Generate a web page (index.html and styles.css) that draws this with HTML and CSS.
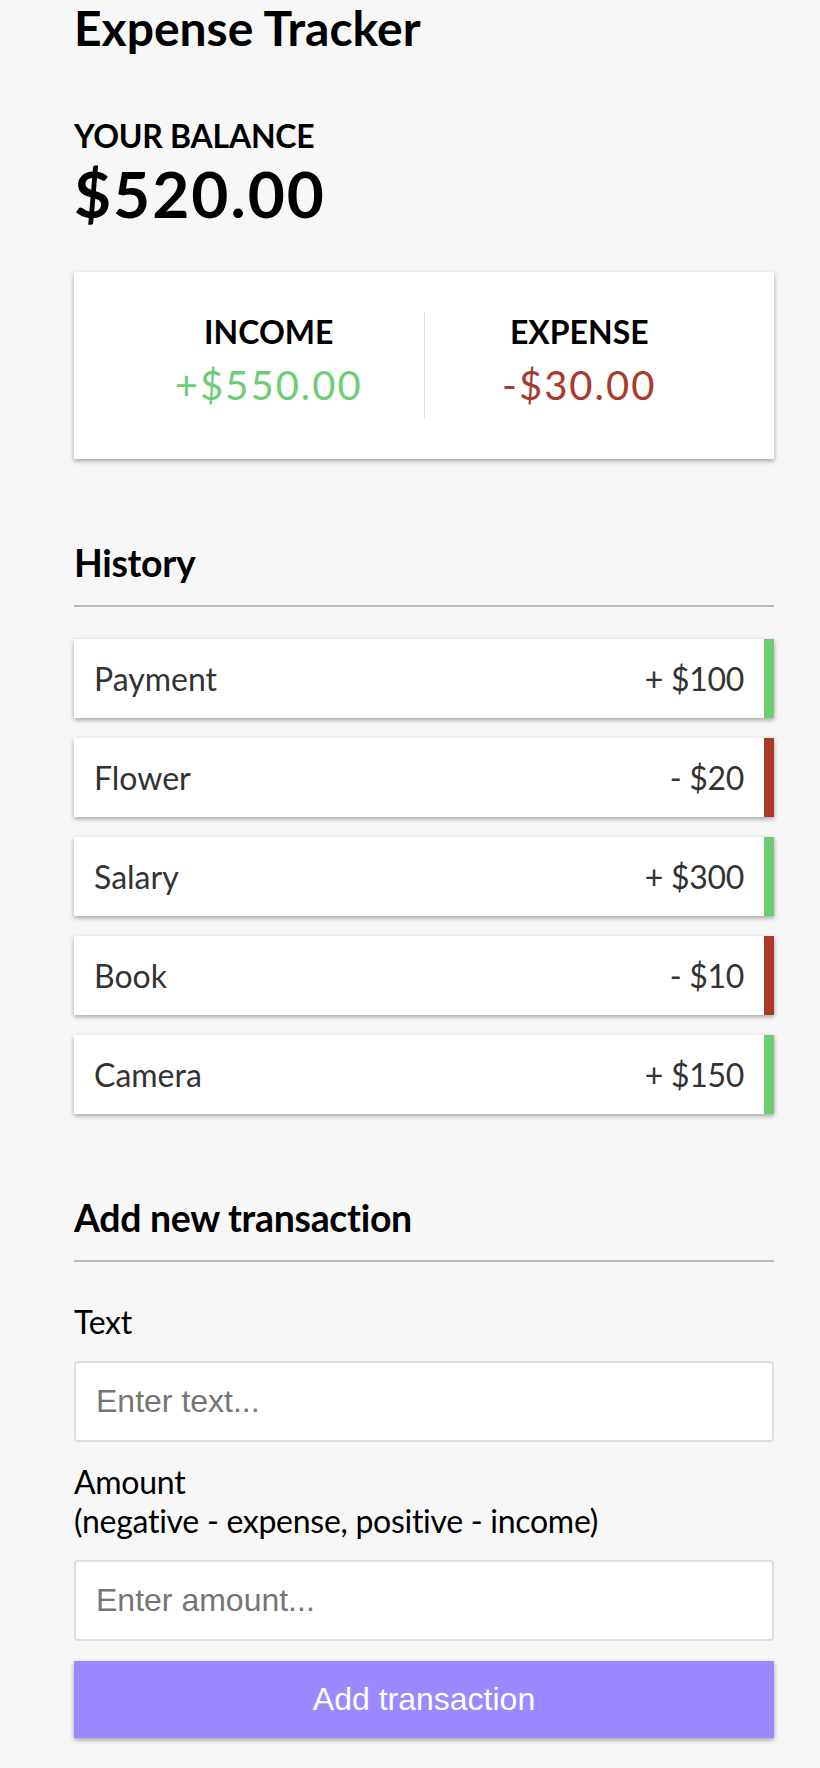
FILE: index.html
```html
<!DOCTYPE html>
<html lang="en">
<head>
<meta charset="UTF-8">
<title>Expense Tracker</title>
<link rel="stylesheet" href="styles.css">
</head>
<body>
<div class="container">
  <h2 class="title">Expense Tracker</h2>

  <div class="balance-block">
    <h4 class="caps">Your Balance</h4>
    <h1 class="balance">$520.00</h1>
  </div>

  <div class="inc-exp">
    <div class="inc-exp-col inc-exp-col--first">
      <h4 class="caps">Income</h4>
      <p class="money money--plus">+$550.00</p>
    </div>
    <div class="inc-exp-col">
      <h4 class="caps">Expense</h4>
      <p class="money money--minus">-$30.00</p>
    </div>
  </div>

  <h3 class="section-title">History</h3>
  <ul class="list">
    <li class="item item--plus">Payment <span class="item-amount">+ $100</span></li>
    <li class="item item--minus">Flower <span class="item-amount">- $20</span></li>
    <li class="item item--plus">Salary <span class="item-amount">+ $300</span></li>
    <li class="item item--minus">Book <span class="item-amount">- $10</span></li>
    <li class="item item--plus">Camera <span class="item-amount">+ $150</span></li>
  </ul>

  <h3 class="section-title">Add new transaction</h3>
  <form class="form">
    <div class="form-control">
      <label class="label" for="text">Text</label>
      <input class="input" type="text" id="text" placeholder="Enter text...">
    </div>
    <div class="form-control">
      <label class="label" for="amount">Amount <br>(negative - expense, positive - income)</label>
      <input class="input" type="number" id="amount" placeholder="Enter amount...">
    </div>
    <button class="btn" type="button">Add transaction</button>
  </form>
</div>
</body>
</html>
```

FILE: styles.css
```css
* {
  box-sizing: border-box;
}

body {
  margin: 0;
  background-color: #f7f7f7;
  font-family: "Lato", "Noto Sans", sans-serif;
  font-size: 32px;
  color: #000;
}

.container {
  width: 700px;
  margin: 0 0 0 74px;
}

.title {
  font-size: 48px;
  font-weight: 700;
  letter-spacing: 0;
  margin: -1px 0 0;
}

.caps {
  font-size: 32px;
  font-weight: 700;
  text-transform: uppercase;
  margin: 0;
}

.balance-block {
  margin-top: 60px;
}

.balance-block .caps {
  letter-spacing: -0.25px;
}

.balance {
  font-size: 64px;
  font-weight: 700;
  letter-spacing: 2px;
  margin: 0;
}

.inc-exp {
  background-color: #fff;
  box-shadow: 0 2px 6px rgba(0, 0, 0, 0.12), 0 2px 4px rgba(0, 0, 0, 0.24);
  padding: 40px;
  display: flex;
  margin: 40px 0;
}

.inc-exp-col {
  flex: 1;
  text-align: center;
}

.inc-exp-col--first {
  border-right: 1px solid #dedede;
}

.money {
  font-size: 40px;
  letter-spacing: 2px;
  margin: 10px 0;
}

.money--plus {
  color: #6fcc74;
}

.money--minus {
  color: #a93a2c;
}

.section-title {
  font-size: 37.44px;
  font-weight: 700;
  letter-spacing: -0.3px;
  border-bottom: 2px solid #bbb;
  padding-bottom: 20px;
  margin: 81px 0 20px;
}

.list {
  list-style-type: none;
  padding: 0;
  margin: 32px 0 80px;
}

.item {
  background-color: #fff;
  box-shadow: 0 2px 6px rgba(0, 0, 0, 0.12), 0 2px 4px rgba(0, 0, 0, 0.24);
  color: #333;
  display: flex;
  justify-content: space-between;
  padding: 20px;
  margin: 20px 0;
}

.item-amount {
  letter-spacing: -0.3px;
}

.item--plus {
  border-right: 10px solid #6fcb73;
}

.item--minus {
  border-right: 10px solid #a9392b;
}

.form {
  margin: 0;
}

.label {
  display: inline-block;
  margin: 20px 0;
  letter-spacing: -0.28px;
}

.input {
  border: 2px solid #dedede;
  border-radius: 4px;
  display: block;
  font-family: "Liberation Sans", Arial, sans-serif;
  font-size: 32px;
  padding: 20px;
  width: 100%;
  background: #fff;
  color: #000;
}

.input::placeholder {
  color: #757575;
}

.btn {
  background-color: #9c88ff;
  box-shadow: 0 2px 6px rgba(0, 0, 0, 0.12), 0 2px 4px rgba(0, 0, 0, 0.24);
  color: #fff;
  border: 0;
  display: block;
  font-family: "Liberation Sans", Arial, sans-serif;
  font-size: 32px;
  margin: 20px 0 60px;
  padding: 20px;
  width: 100%;
}
```
